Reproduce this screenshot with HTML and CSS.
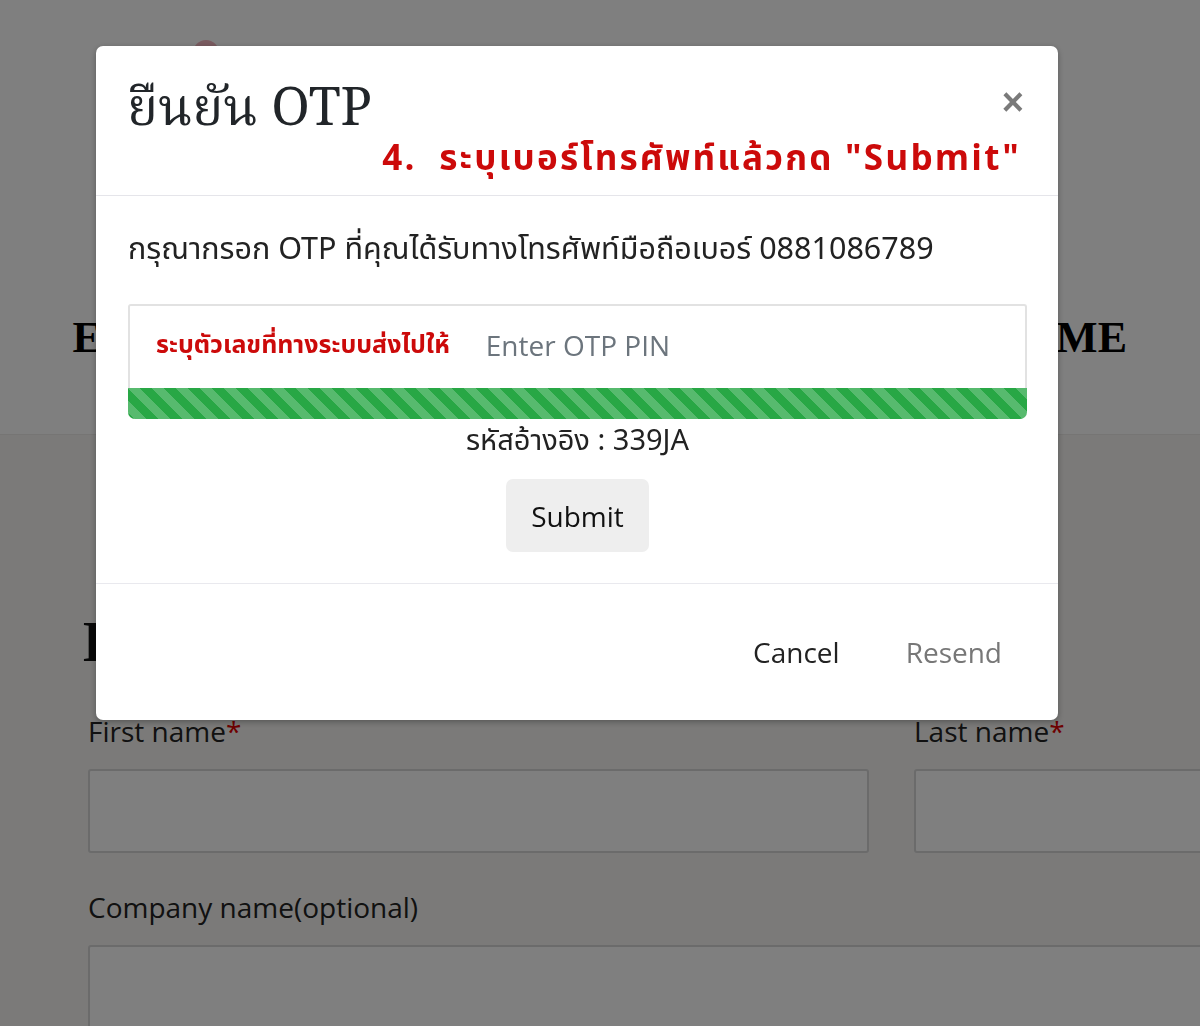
FILE: index.html
```html
<!DOCTYPE html>
<html lang="th">
<head>
    <meta charset="UTF-8">
    <meta name="viewport" content="width=device-width, initial-scale=1.0">
    <title>ยืนยัน OTP</title>
    <link rel="stylesheet" href="styles.css">
</head>
<body>
    <header class="top">
        <span class="logo-dot"></span>
        <h1 class="top-title">EVENT REGISTRATION FORM: COMPANY NAME</h1>
    </header>

    <main class="checkout">
        <h2 class="checkout-title">Billing details</h2>
        <div class="form-row">
            <div class="field">
                <label>First name<span class="req">*</span></label>
                <input type="text">
            </div>
            <div class="field">
                <label>Last name<span class="req">*</span></label>
                <input type="text">
            </div>
        </div>
        <div class="field field-wide">
            <label>Company name(optional)</label>
            <input type="text">
        </div>
    </main>

    <div class="overlay"></div>

    <div class="modal">
        <div class="modal-header">
            <div class="header-row">
                <h3 class="modal-title">ยืนยัน OTP</h3>
                <button class="close">&times;</button>
            </div>
            <p class="note">4.&nbsp; ระบุเบอร์โทรศัพท์แล้วกด "Submit"</p>
        </div>
        <div class="modal-body">
            <p class="info">กรุณากรอก OTP ที่คุณได้รับทางโทรศัพท์มือถือเบอร์ 0881086789</p>
            <div class="otp-box">
                <span class="hint">ระบุตัวเลขที่ทางระบบส่งไปให้</span>
                <input class="otp-input" type="text" placeholder="Enter OTP PIN">
            </div>
            <div class="progress"></div>
            <p class="ref">รหัสอ้างอิง : 339JA</p>
            <button class="btn-submit">Submit</button>
        </div>
        <div class="modal-footer">
            <button class="btn-link">Cancel</button>
            <button class="btn-link muted">Resend</button>
        </div>
    </div>
</body>
</html>
```

FILE: styles.css
```css
body {
    margin: 0;
    background-color: #fff;
    font-family: "Open Sans", "Noto Sans Thai", sans-serif;
    overflow: hidden;
    height: 1026px;
}

/* หน้าเว็บด้านหลัง */
.top {
    height: 435px;
    border-bottom: 1px solid #eceae8;
    box-sizing: border-box;
    padding-top: 308px;
    text-align: center;
    position: relative;
}

.logo-dot {
    position: absolute;
    left: 193px;
    top: 40px;
    width: 26px;
    height: 26px;
    border-radius: 50%;
    background-color: #f3b6bf;
}

.top-title {
    margin: 0;
    font-family: "Liberation Serif", serif;
    font-size: 44px;
    line-height: 60px;
    letter-spacing: 0.35px;
    font-weight: bold;
    color: #000;
    white-space: nowrap;
}

.checkout {
    background-color: #f6f5f3;
    padding: 177px 0 0 88px;
    height: 600px;
}

.checkout-title {
    margin: 0 0 40px -5px;
    font-family: "Liberation Serif", serif;
    font-size: 56px;
    line-height: 60px;
    color: #111;
}

.form-row {
    display: flex;
    gap: 45px;
}

.field {
    display: flex;
    flex-direction: column;
    gap: 19px;
    width: 781px;
    flex-shrink: 0;
}

.field label {
    font-size: 28px;
    line-height: 38px;
    color: #222;
}

.req {
    color: #d00;
}

.field input {
    height: 84px;
    box-sizing: border-box;
    border: 2px solid #d6d6d6;
    border-radius: 3px;
    background-color: #fff;
}

.field-wide {
    width: 1300px;
    margin-top: 35px;
}

.overlay {
    position: fixed;
    inset: 0;
    background-color: rgba(0, 0, 0, 0.5);
}

/* กล่อง OTP */
.modal {
    position: fixed;
    left: 96px;
    top: 46px;
    width: 962px;
    height: 674px;
    background-color: #fff;
    border-radius: 7px;
    display: flex;
    flex-direction: column;
    box-shadow: 0 2px 6px rgba(0, 0, 0, 0.3);
}

.modal-header {
    height: 150px;
    border-bottom: 1px solid #e5e5ea;
    padding: 34px 34px 0 31px;
    box-sizing: border-box;
}

.header-row {
    display: flex;
    justify-content: space-between;
    align-items: flex-start;
}

.modal-title {
    margin: 0;
    font-family: "Noto Serif Thai", "Liberation Serif", serif;
    font-size: 52px;
    font-weight: normal;
    line-height: 64px;
    color: #212529;
}

.close {
    border: none;
    background: none;
    padding: 0;
    margin-top: 2px;
    font-family: "Liberation Sans", sans-serif;
    font-size: 38px;
    font-weight: bold;
    line-height: 40px;
    color: #7a7a7a;
}

.note {
    margin: -6px 3px 0 0;
    text-align: right;
    font-family: "Noto Sans Thai", "Liberation Sans", sans-serif;
    font-size: 35px;
    font-weight: bold;
    letter-spacing: 2.2px;
    color: #cc0a0a;
    line-height: 44px;
}

.modal-body {
    height: 388px;
    padding: 30px 31px 0 32px;
    box-sizing: border-box;
    border-bottom: 1px solid #e9e9ee;
    display: flex;
    flex-direction: column;
    align-items: center;
}

.info {
    align-self: flex-start;
    margin: 0;
    font-family: "Noto Sans Thai", sans-serif;
    font-size: 30.5px;
    line-height: 48px;
    color: #222;
}

.otp-box {
    margin-top: 30px;
    width: 100%;
    height: 84px;
    box-sizing: border-box;
    border: 2px solid #e2e2e2;
    border-bottom: none;
    border-radius: 3px 3px 0 0;
    display: flex;
    align-items: center;
    padding: 0 0 4px 26px;
    gap: 34px;
}

.hint {
    font-family: "Noto Sans Thai", sans-serif;
    font-size: 25px;
    font-weight: bold;
    color: #cc0a0a;
    white-space: nowrap;
}

.otp-input {
    border: none;
    outline: none;
    flex: 1;
    font-family: "Open Sans", sans-serif;
    font-size: 28px;
    color: #333;
}

.otp-input::placeholder {
    color: #6c757d;
}

.progress {
    width: 100%;
    height: 31px;
    border-radius: 0 0 7px 7px;
    background-color: #28a745;
    background-image: linear-gradient(45deg, rgba(255, 255, 255, .22) 25%, transparent 25%, transparent 50%, rgba(255, 255, 255, .22) 50%, rgba(255, 255, 255, .22) 75%, transparent 75%, transparent);
    background-size: 24px 24px;
}

.ref {
    margin: 2px 0 0;
    font-family: "Noto Sans Thai", sans-serif;
    font-size: 29px;
    line-height: 40px;
    color: #222;
}

.btn-submit {
    margin-top: 18px;
    width: 143px;
    height: 73px;
    border: none;
    border-radius: 7px;
    background-color: #eeeeee;
    font-family: "Open Sans", sans-serif;
    font-size: 28px;
    color: #111;
}

.modal-footer {
    flex: 1;
    display: flex;
    justify-content: flex-end;
    align-items: center;
    gap: 66px;
    padding: 0 56px 0 0;
}

.btn-link {
    border: none;
    background: none;
    padding: 0;
    font-family: "Open Sans", sans-serif;
    font-size: 28px;
    color: #222;
}

.btn-link.muted {
    color: #777;
}
```
